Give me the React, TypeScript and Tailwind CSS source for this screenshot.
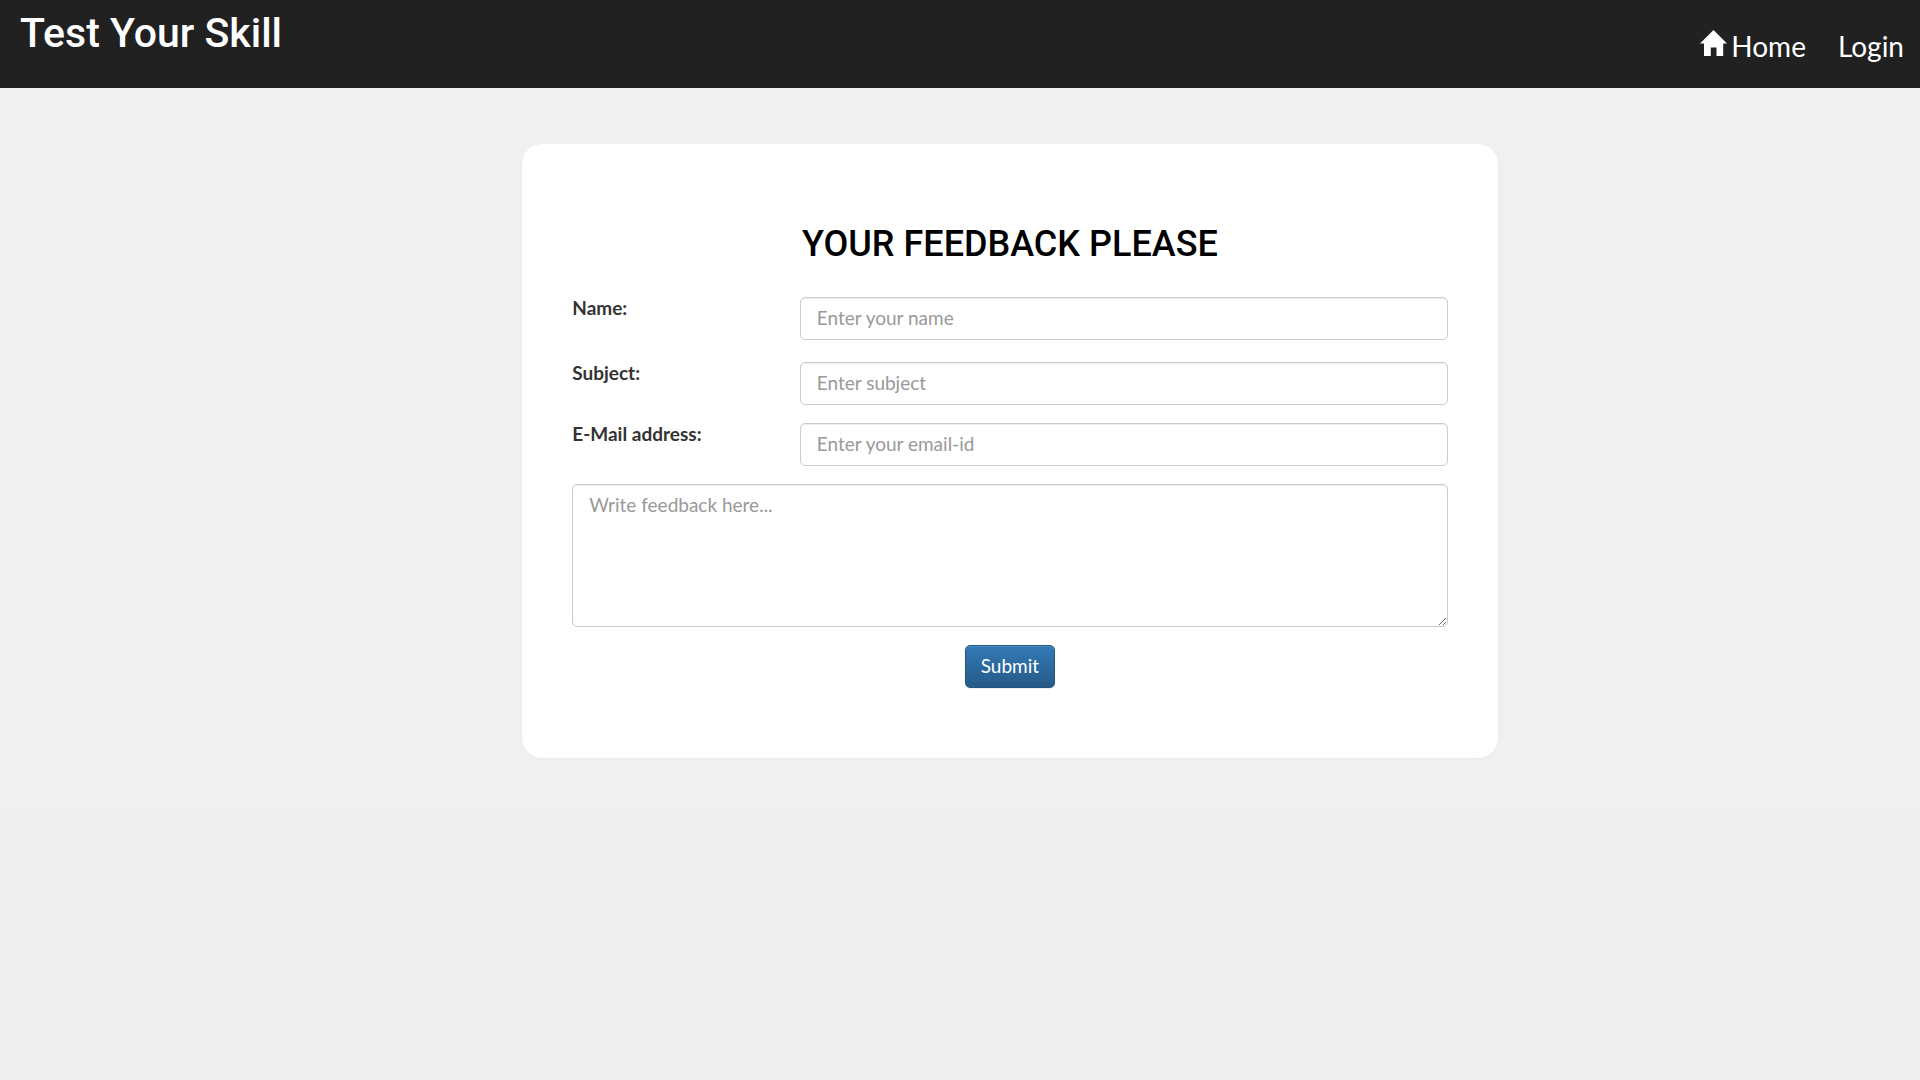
import React from "react";

const control =
  "block w-full rounded-[5px] border border-[#ccc] bg-white px-4 text-[19px] leading-6 text-[#555] shadow-[inset_0_1px_1px_rgba(0,0,0,0.075)] outline-none placeholder:text-[#999] focus:border-[#66afe9]";

function HomeIcon() {
  return (
    <svg viewBox="0 0 27 26" className="h-[26px] w-[27px]" fill="currentColor" aria-hidden="true">
      <path d="M13.5 0 27 13.5H23.2V26H16.5V17.5H10.8V26H4V13.5H0Z" />
    </svg>
  );
}

type FieldProps = { id: string; label: string; type: string; placeholder: string };

function Field({ id, label, type, placeholder }: FieldProps) {
  return (
    <div className="grid grid-cols-[26fr_74fr] items-start first:mb-1">
      <label htmlFor={id} className="text-[19px] leading-[22px] font-bold text-[#333]">
        {label}
      </label>
      <input id={id} name={id} type={type} placeholder={placeholder} className={`${control} h-[43px] pb-0.5`} />
    </div>
  );
}

export default function App() {
  return (
    <div className="min-h-screen bg-[#eee] font-['Lato',sans-serif]">
      <header className="flex h-[88px] items-start justify-between bg-[#212121] pr-4 pl-5 text-white">
        <a href="#" className="pt-2 font-['Roboto',sans-serif] text-[41px] leading-[50px] font-medium">
          Test Your Skill
        </a>
        <nav className="flex gap-8 pt-[30px] text-[28px] leading-8">
          <a href="#home" className="flex items-start gap-1">
            <HomeIcon />
            Home
          </a>
          <a href="#login">Login</a>
        </nav>
      </header>
      <main className="bg-[#f0f0f0] pt-14 pb-[51px]">
        <form
          className="ml-[27.2%] w-[50.8%] rounded-[20px] bg-white px-[50px] pt-[76px] pb-[70px] shadow-[0_1px_2px_1px_#ebebeb]"
          onSubmit={(e) => e.preventDefault()}
        >
          <h1 className="text-center font-['Roboto',sans-serif] text-4xl leading-[48px] font-medium text-black">
            YOUR FEEDBACK PLEASE
          </h1>
          <div className="mt-[29px] flex flex-col gap-[18px]">
            <Field id="name" label="Name:" type="text" placeholder="Enter your name" />
            <Field id="subject" label="Subject:" type="text" placeholder="Enter subject" />
            <Field id="email" label="E-Mail address:" type="email" placeholder="Enter your email-id" />
            <textarea
              aria-label="Feedback"
              placeholder="Write feedback here..."
              className={`${control} h-[143px] resize-y py-2`}
            />
            <button
              type="submit"
              className="h-[43px] self-center rounded-[5px] border border-[#245580] bg-linear-to-b from-[#337ab7] to-[#265a88] px-[15px] pb-0.5 text-[19px] leading-6 text-white shadow-[inset_0_1px_0_rgba(255,255,255,0.15),0_1px_1px_rgba(0,0,0,0.075)]"
            >
              Submit
            </button>
          </div>
        </form>
      </main>
    </div>
  );
}
